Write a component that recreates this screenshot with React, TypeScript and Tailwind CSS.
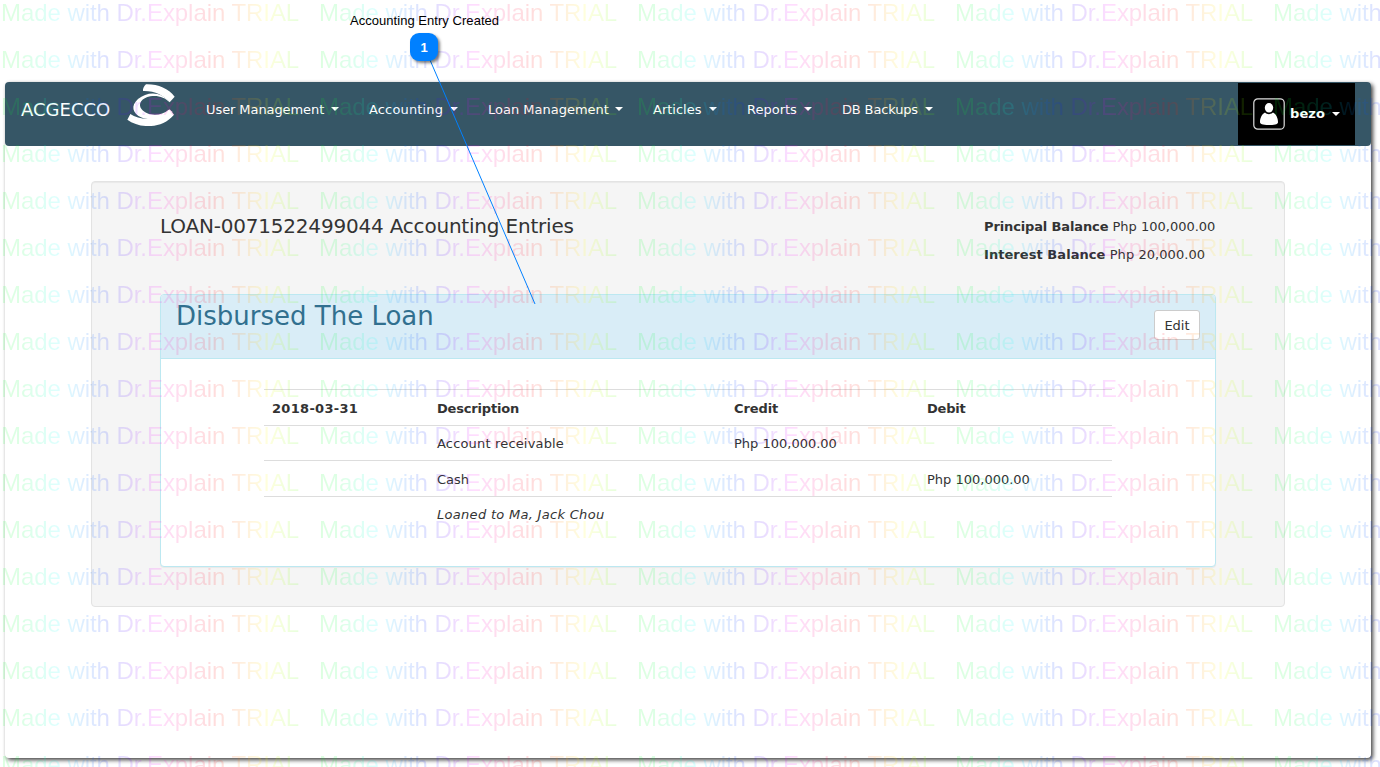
import React from "react";

const columns = [0, 1, 2, 3, 4];
const rows = Array.from({ length: 17 }, (_, i) => i);

function Watermark() {
  return (
    <div aria-hidden="true" className="pointer-events-none absolute inset-0 z-10 overflow-hidden font-['Liberation_Sans',sans-serif] text-[24px] leading-[47px] opacity-[0.13]">
      <div className="-mt-[11px] ml-px w-[1590px]">
        {rows.map((r) => (
          <div key={r} className="flex h-[47px]">
            {columns.map((c) => (
              <span
                key={c}
                className="block w-[318px] shrink-0 whitespace-pre bg-[linear-gradient(90deg,#00ff20_0px,#00ff40_20px,#00ffff_58px,#0080ff_82px,#0020ff_105px,#6000ff_128px,#ff00ff_155px,#ff0060_185px,#ff0000_215px,#ff8000_240px,#ffff00_266px,#60ff00_295px,#00ff20_318px)] bg-clip-text text-transparent tracking-[-0.06px]"
              >
                Made with Dr.Explain TRIAL
              </span>
            ))}
          </div>
        ))}
      </div>
    </div>
  );
}

function Caret() {
  return <span className="inline-block border-x-4 border-t-4 border-x-transparent border-t-white" />;
}

function NavItem({ label, className }: { label: string; className: string }) {
  return (
    <a className={`flex shrink-0 items-center justify-between whitespace-nowrap text-[13px] text-white ${className}`}>
      <span className="pt-[2px]">{label}</span>
      <Caret />
    </a>
  );
}

function Logo() {
  return (
    <svg className="ml-[16px] mt-[2px] h-[42px] w-[49px]" viewBox="0 0 147 126" fill="#fff">
      <path d="M57 1C92 0 124 13 143 38L128 55C108 33 84 20 48 21C47 15 51 7 57 1Z" />
      <path d="M128 55C104 22 62 21 33 45C10 66 17 88 42 100C72 112 112 106 137 84L125 77C101 99 60 96 44 76C31 59 45 42 70 37C92 33 114 40 128 55Z" />
      <path d="M10 90C38 110 97 113 128 76L141 92C103 137 37 133 1 107Z" />
    </svg>
  );
}

function Navbar() {
  return (
    <nav className="flex h-[64px] rounded-[4px] bg-[#365666] pl-[16px]">
      <span className="mt-[17px] w-[90px] whitespace-nowrap text-[18px] leading-[22px] text-white">ACGECCO</span>
      <Logo />
      <div className="ml-[30px] flex h-[54px]">
        <NavItem label="User Management" className="w-[133px] tracking-[-0.08px]" />
        <NavItem label="Accounting" className="ml-[30px] w-[89px] tracking-[0.15px]" />
        <NavItem label="Loan Management" className="ml-[30px] w-[135px]" />
        <NavItem label="Articles" className="ml-[30px] w-[64px]" />
        <NavItem label="Reports" className="ml-[30px] w-[65px]" />
        <NavItem label="DB Backups" className="ml-[30px] w-[91px] tracking-[-0.15px]" />
      </div>
      <div className="ml-auto mr-[16px] mt-[1px] flex h-[62px] w-[117px] items-center bg-black pl-[15px] text-[13px] font-bold text-white">
        <svg className="h-[32px] w-[32px]" viewBox="0 0 32 32" fill="none">
          <rect x="0.8" y="0.8" width="30.4" height="30.4" rx="4" stroke="#ddd" strokeWidth="1.2" />
          <ellipse cx="16" cy="9.8" rx="4.2" ry="4.8" fill="#fff" />
          <path d="M12 14.5C14 16.7 18 16.7 20 14.5C23 16 25 20 25 24C25 26 23 27 16 27C9 27 7 26 7 24C7 20 9 16 12 14.5Z" fill="#fff" />
        </svg>
        <span className="ml-[5px] w-[42px] tracking-[0.1px]">bezo</span>
        <Caret />
      </div>
    </nav>
  );
}

const cell = "px-2 pt-[2px] text-left";

function EntriesTable() {
  return (
    <table className="w-[848px] table-fixed border-collapse text-[13px] text-[#333]">
      <colgroup>
        <col className="w-[165px]" />
        <col className="w-[297px]" />
        <col className="w-[193px]" />
        <col className="w-[193px]" />
      </colgroup>
      <tbody>
        <tr className="h-[36px] border-t border-[#ddd] font-bold">
          <td className={`${cell} tracking-[0.3px]`}>2018-03-31</td>
          <td className={`${cell} tracking-[-0.18px]`}>Description</td>
          <td className={`${cell} tracking-[-0.1px]`}>Credit</td>
          <td className={`${cell} tracking-[-0.2px]`}>Debit</td>
        </tr>
        <tr className="h-[35px] border-t border-[#ddd]">
          <td />
          <td className={`${cell} tracking-[0.17px]`}>Account receivable</td>
          <td className={cell}>Php 100,000.00</td>
          <td />
        </tr>
        <tr className="h-[36px] border-t border-[#ddd]">
          <td />
          <td className={cell}>Cash</td>
          <td />
          <td className={cell}>Php 100,000.00</td>
        </tr>
        <tr className="h-[35px] border-t border-[#ddd]">
          <td />
          <td className="px-2 text-left italic tracking-[0.3px]">Loaned to Ma, Jack Chou</td>
          <td />
          <td />
        </tr>
      </tbody>
    </table>
  );
}

export default function App() {
  return (
    <div className="relative h-[767px] w-[1380px] overflow-hidden bg-white pl-[5px] pt-[82px] font-['DejaVu_Sans',sans-serif]">
      <main className="h-[676px] w-[1366px] rounded-[4px] bg-white shadow-[2px_2px_4px_rgba(0,0,0,0.75)]">
        <Navbar />
        <section className="ml-[86px] mt-[35px] h-[426px] w-[1194px] rounded-[4px] border border-[#e3e3e3] bg-[#f5f5f5] px-[68px] shadow-[inset_0_1px_1px_rgba(0,0,0,0.05)]">
          <div className="flex h-[112px] justify-between text-[#333]">
            <h1 className="mt-[32px] whitespace-nowrap text-[20px] leading-[24px] tracking-[-0.2px]">LOAN-0071522499044 Accounting Entries</h1>
            <div className="mt-[31px] w-[232px] whitespace-nowrap text-[13px] leading-[28px]">
              <p><b className="tracking-[-0.13px]">Principal Balance</b> Php 100,000.00</p>
              <p className="tracking-[0.06px]"><b>Interest Balance</b> Php 20,000.00</p>
            </div>
          </div>
          <div className="h-[273px] rounded-[4px] border border-[#bce8f1] bg-white shadow-[0_1px_1px_rgba(0,0,0,0.05)]">
            <header className="flex h-[64px] justify-between rounded-t-[3px] border-b border-[#bce8f1] bg-[#d9edf7] px-[15px]">
              <h2 className="mt-[5px] whitespace-nowrap text-[26px] leading-[32px] text-[#31708f]">Disbursed The Loan</h2>
              <button className="mt-[15px] h-[30px] w-[46px] rounded-[3px] border border-[#ccc] bg-white pt-[2px] text-[13px] text-[#333]">Edit</button>
            </header>
            <div className="ml-[103px] mt-[30px]">
              <EntriesTable />
            </div>
          </div>
        </section>
      </main>
      <Watermark />
      <svg className="absolute left-0 top-0 z-20 h-[310px] w-[560px]" fill="none">
        <path d="M424 46L535 304" stroke="#0080ff" strokeWidth="1" />
      </svg>
      <p className="absolute left-[350px] top-[13px] z-20 whitespace-nowrap font-['Liberation_Sans',sans-serif] text-[13px] leading-[15px] tracking-[0.04px] text-black">Accounting Entry Created</p>
      <div className="absolute left-[410px] top-[33px] z-20 flex h-[28px] w-[28px] items-center justify-center rounded-[9px] bg-[#0080ff] pt-px font-['Liberation_Sans',sans-serif] text-[13px] font-bold text-white shadow-[2px_2px_3px_rgba(0,0,0,0.5)]">1</div>
    </div>
  );
}
